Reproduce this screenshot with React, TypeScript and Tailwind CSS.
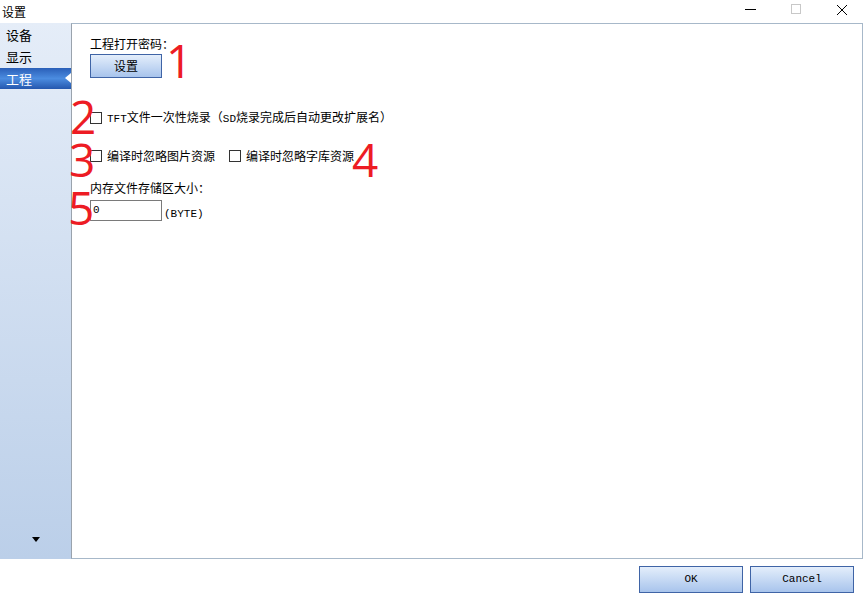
import React from "react";

const cjk = '"Noto Sans CJK SC", "Noto Sans", sans-serif';
const mono = '"Liberation Mono", "Noto Sans CJK SC", monospace';

function Latin({ children }: { children: React.ReactNode }) {
  return (
    <span className="text-[11px]" style={{ fontFamily: mono }}>
      {children}
    </span>
  );
}

function Check({ label }: { label: React.ReactNode }) {
  return (
    <div className="flex items-center h-[14px]">
      <div className="w-[12px] h-[12px] border border-[#333] bg-white" />
      <span className="ml-[5px] text-[12px] leading-[14px] text-black whitespace-nowrap">{label}</span>
    </div>
  );
}

function Num({ n, x, y }: { n: string; x: number; y: number }) {
  return (
    <span
      className="absolute text-[46px] leading-none text-[#ed1c24] font-normal"
      style={{ left: x, top: y, fontFamily: '"Open Sans", "Liberation Sans", sans-serif' }}
    >
      {n}
    </span>
  );
}

export default function App() {
  return (
    <div className="w-[865px] h-[597px] bg-white flex flex-col overflow-hidden relative" style={{ fontFamily: cjk }}>
      {/* title bar */}
      <div className="h-[23px] flex items-center relative shrink-0">
        <span className="ml-[2px] text-[12px] leading-none text-black">设置</span>
        <div className="absolute left-[745px] top-[9px] w-[11px] h-[1px] bg-black" />
        <div className="absolute left-[791px] top-[4px] w-[10px] h-[10px] border border-[#c8c8c8]" />
        <svg className="absolute left-[836px] top-[4px]" width="12" height="12" viewBox="0 0 12 12">
          <path d="M1 1 L11 11 M11 1 L1 11" stroke="#000" strokeWidth="1" />
        </svg>
      </div>

      {/* body */}
      <div className="h-[536px] flex shrink-0">
        {/* sidebar */}
        <div className="w-[71px] h-full flex flex-col relative bg-gradient-to-b from-[#e5edf8] to-[#bbcfe9]">
          <div className="h-[21px] mt-[1px] flex items-center pl-[6px] text-[13px] text-black">设备</div>
          <div className="h-[23px] flex items-center pl-[6px] text-[13px] text-black">显示</div>
          <div className="h-[21px] flex items-center pl-[6px] text-[13px] text-white relative bg-[linear-gradient(to_bottom,#2a5fb8,#4b8ce0_50%,#2457ae)]">
            工程
            <div className="absolute right-0 top-[5px] w-0 h-0 border-y-[5px] border-y-transparent border-r-[6px] border-r-white" />
          </div>
          <div className="flex-1" />
          <div className="h-[14px] mb-[8px] flex justify-center">
            <div className="w-0 h-0 border-x-[4px] border-x-transparent border-t-[5px] border-t-black" />
          </div>
        </div>

        {/* panel */}
        <div className="flex-1 mr-[2px] h-full border border-[#a7b8c9] border-l-[#9aa3ad] bg-white relative">
          <div className="pl-[18px] pt-[13px] flex flex-col">
            <div className="text-[12px] leading-[14px] text-black">工程打开密码：</div>
            <button className="mt-[3px] w-[72px] h-[24px] border border-[#3f64a6] bg-gradient-to-b from-[#e4eefb] to-[#a8c4ec] text-[12px] text-black flex items-center justify-center">
              设置
            </button>
            <div className="mt-[33px] flex">
              <Check label={<><Latin>TFT</Latin>文件一次性烧录（<Latin>SD</Latin>烧录完成后自动更改扩展名）</>} />
            </div>
            <div className="mt-[24px] flex gap-[14px]">
              <Check label="编译时忽略图片资源" />
              <Check label="编译时忽略字库资源" />
            </div>
            <div className="mt-[18px] text-[12px] leading-[14px] text-black">内存文件存储区大小：</div>
            <div className="mt-[3px] flex items-center">
              <div className="w-[72px] h-[21px] border border-[#7a7a7a] flex items-center pl-[2px]">
                <Latin>0</Latin>
              </div>
              <span className="ml-[2px]"><Latin>(BYTE)</Latin></span>
            </div>
          </div>
          <Num n="1" x={94} y={13} />
          <Num n="2" x={-2} y={69} />
          <Num n="3" x={-3} y={112} />
          <Num n="4" x={280} y={112} />
          <Num n="5" x={-4} y={160} />
        </div>
      </div>

      {/* footer */}
      <div className="flex-1 flex justify-end items-start pt-[7px] pr-[11px] gap-[7px]">
        <button className="w-[104px] h-[27px] border border-[#3f64a6] bg-gradient-to-b from-[#e4eefb] to-[#a8c4ec] flex items-center justify-center text-black">
          <Latin>OK</Latin>
        </button>
        <button className="w-[104px] h-[27px] border border-[#3f64a6] bg-gradient-to-b from-[#e4eefb] to-[#a8c4ec] flex items-center justify-center text-black">
          <Latin>Cancel</Latin>
        </button>
      </div>
    </div>
  );
}
